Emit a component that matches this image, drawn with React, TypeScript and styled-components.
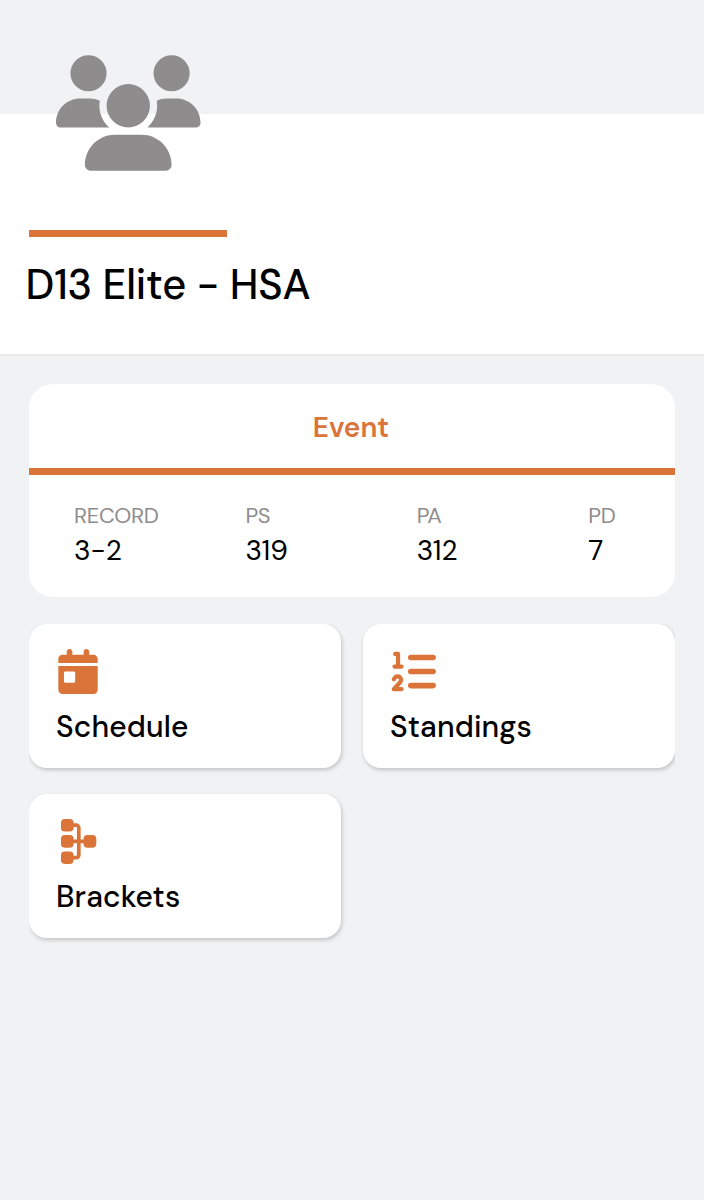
import React from "react";
import styled, { createGlobalStyle } from "styled-components";
import { FaCalendarDay, FaListOl, FaUsers } from "react-icons/fa6";

const ORANGE = "#da7439";
const GRAY = "#8f8c8d";
const BACKDROP = "#f0f2f4";

const GlobalStyle = createGlobalStyle`
  * { box-sizing: border-box; }
  body {
    margin: 0;
    background: ${BACKDROP};
    color: #000;
    font-family: "DM Sans", Inter, "Liberation Sans", sans-serif;
  }
`;

const Page = styled.div`
  min-height: 1200px;
  background: ${BACKDROP};
`;

const Header = styled.header`
  height: 356px;
  padding: 54.6px 26px 0;
  background: linear-gradient(${BACKDROP} 114px, #fff 114px);
  border-bottom: 2px solid #e8e9ea;
`;

const TeamIcon = styled(FaUsers)`
  display: block;
  width: 144.5px;
  height: 116px;
  margin-left: 30px;
  color: ${GRAY};
`;

const Accent = styled.div`
  width: 198.4px;
  height: 7px;
  margin: 59.4px 0 0 3px;
  background: ${ORANGE};
`;

const Title = styled.h1`
  margin: 23px 0 0 -0.5px;
  font-size: 41.5px;
  line-height: 50px;
  font-weight: 500;
  letter-spacing: -0.15px;
  white-space: nowrap;
`;

const Main = styled.main`
  padding: 28px 29px 0;
`;

const Card = styled.section`
  height: 213px;
  border-radius: 24px;
  background: #fff;
`;

const Tab = styled.div`
  height: 91px;
  padding: 27px 2px 0 0;
  border-bottom: 7px solid ${ORANGE};
  color: ${ORANGE};
  font-size: 28px;
  line-height: 34px;
  font-weight: 650;
  letter-spacing: 0;
  text-align: center;
`;

const Stats = styled.div`
  display: grid;
  grid-template-columns: repeat(3, 171.4px) 1fr;
  padding: 27px 0 0 45px;
`;

const Label = styled.div`
  color: ${GRAY};
  font-size: 22px;
  line-height: 28px;
  letter-spacing: -0.3px;
`;

const Value = styled.div`
  margin-top: 3px;
  font-size: 28px;
  line-height: 36px;
`;

const Tiles = styled.div`
  display: grid;
  grid-template-columns: 1fr 1fr;
  gap: 26px 22px;
  margin-top: 27px;
  padding-bottom: 8px;
  overflow: hidden;
`;

const Tile = styled.div`
  height: 144px;
  padding: 25px 27px 0;
  border-radius: 18px;
  background: #fff;
  box-shadow: 1px 2px 4px rgba(0, 0, 0, 0.2);
`;

const IconSlot = styled.div`
  display: flex;
  height: 45px;
  color: ${ORANGE};
`;

const CalendarIcon = styled(FaCalendarDay)`
  width: 40px;
  height: 45px;
  margin-left: 2.4px;
`;

const ListIcon = styled(FaListOl)`
  width: 45px;
  height: 45px;
  margin-left: 0.6px;
`;

const BracketSvg = styled.svg`
  width: 36px;
  height: 46px;
  margin-left: 4.5px;
`;

const TileLabel = styled.div`
  margin-top: 14px;
  font-size: 30px;
  line-height: 38px;
  font-weight: 500;
  letter-spacing: 0.15px;
`;

function BracketIcon() {
  return (
    <BracketSvg viewBox="0 0 36 46" fill="currentColor">
      <rect x="-0.2" y="0" width="12.8" height="12.6" rx="4" />
      <rect x="-0.2" y="16.1" width="12.8" height="12.6" rx="4" />
      <rect x="-0.2" y="32.4" width="12.8" height="12.6" rx="4" />
      <rect x="22.5" y="16.1" width="12.8" height="12.6" rx="4" />
      <path
        d="M12 6.2h3.2a2.6 2.6 0 0 1 2.6 2.6v27.3a2.6 2.6 0 0 1-2.6 2.6H12M12 22.4h12"
        fill="none"
        stroke="currentColor"
        strokeWidth="3.7"
      />
    </BracketSvg>
  );
}

const stats = [
  { label: "RECORD", value: "3-2" },
  { label: "PS", value: "319" },
  { label: "PA", value: "312" },
  { label: "PD", value: "7" },
];

const tiles = [
  { label: "Schedule", icon: <CalendarIcon /> },
  { label: "Standings", icon: <ListIcon /> },
  { label: "Brackets", icon: <BracketIcon /> },
];

export default function App() {
  return (
    <Page>
      <GlobalStyle />
      <Header>
        <TeamIcon />
        <Accent />
        <Title>D13 Elite - HSA</Title>
      </Header>
      <Main>
        <Card>
          <Tab>Event</Tab>
          <Stats>
            {stats.map((s) => (
              <div key={s.label}>
                <Label>{s.label}</Label>
                <Value>{s.value}</Value>
              </div>
            ))}
          </Stats>
        </Card>
        <Tiles>
          {tiles.map((t) => (
            <Tile key={t.label}>
              <IconSlot>{t.icon}</IconSlot>
              <TileLabel>{t.label}</TileLabel>
            </Tile>
          ))}
        </Tiles>
      </Main>
    </Page>
  );
}
